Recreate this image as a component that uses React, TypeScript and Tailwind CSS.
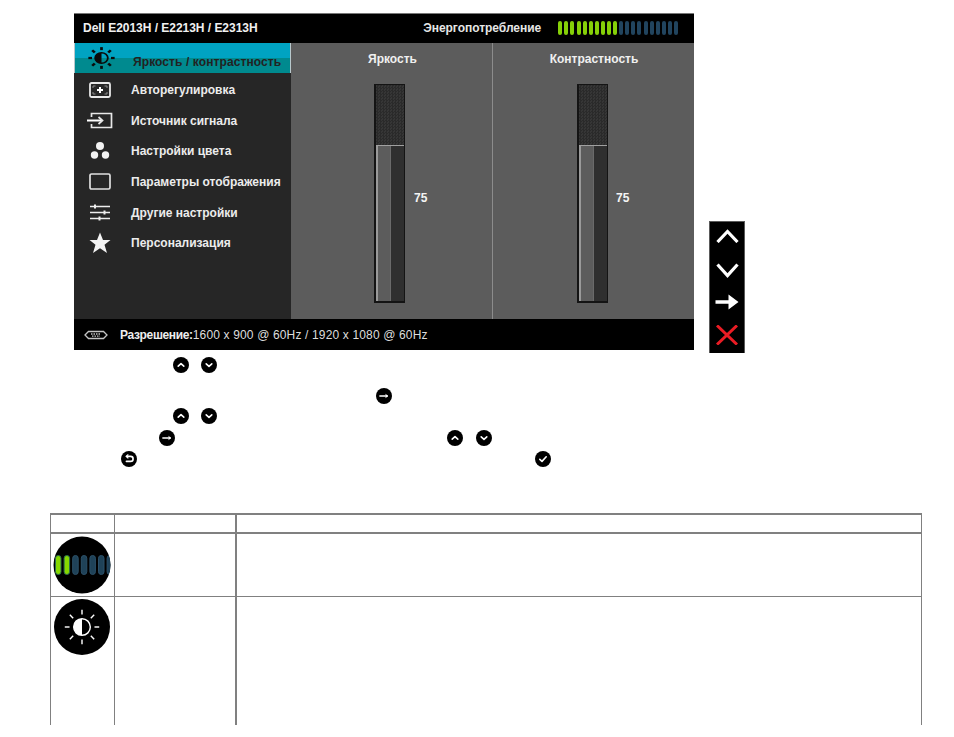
import React from "react";

const Chip = ({ children }: { children: React.ReactNode }) => (
  <span className="flex h-[16px] w-[16px] shrink-0 items-center justify-center rounded-full bg-black">
    <svg viewBox="0 0 16 16" className="h-[16px] w-[16px]" fill="none" stroke="#fff" strokeWidth="1.6" strokeLinecap="round" strokeLinejoin="round">
      {children}
    </svg>
  </span>
);
const Up = () => <Chip><path d="M5.200 9.200 8 6.600l2.800 2.600" /></Chip>;
const Down = () => <Chip><path d="M5.200 6.800 8 9.400l2.800-2.600" /></Chip>;
const Right = () => <Chip><path d="M3.800 8h7.400" strokeWidth="1.300" /><path d="M9.800 6.600 11.800 8l-2 1.400" fill="#fff" strokeWidth="0.800" /></Chip>;
const Back = () => <Chip><path d="M6 5.400H9.600a2.400 2.400 0 0 1 0 5H5.400" /><path d="M7 3.800 5 5.400 7 7" strokeWidth="1.200" /></Chip>;
const Check = () => <Chip><path d="M4.800 8.400 7 10.400l4.200-4.600" /></Chip>;

const Sun = ({ width, height, color, ray, ring }: { width: number; height: number; color: string; ray: number; ring: number }) => {
  const rays = [0, 45, 90, 135, 180, 225, 270, 315];
  return (
    <svg viewBox="0 0 32 32" width={width} height={height} fill="none" preserveAspectRatio="none">
      {rays.map((a) => (
        <line key={a} x1="16" y1="1.500" x2="16" y2="5.500" stroke={color} strokeWidth={ray} transform={`rotate(${a} 16 16)`} />
      ))}
      <circle cx="16" cy="16" r="7" stroke={color} strokeWidth={ring} />
      <path d="M16 9a7 7 0 0 0 0 14z" fill={color} />
    </svg>
  );
};

const menu: { label: string; icon: React.ReactNode }[] = [
  {
    label: "Авторегулировка",
    icon: (
      <svg width="24" height="20" viewBox="0 0 24 20" fill="none" stroke="#e8e8e8">
        <rect x="2" y="3" width="20" height="14" rx="1.500" strokeWidth="1.800" />
        <path d="M9 10h6M12 7v6" strokeWidth="2" stroke="#fff" />
        <path d="M5 8V6h2.500M16.500 6H19v2M5 12v2h2.500M16.500 14H19v-2" stroke="#8a8a8a" />
      </svg>
    ),
  },
  {
    label: "Источник сигнала",
    icon: (
      <svg width="26" height="20" viewBox="0 0 26 20" fill="none" stroke="#e8e8e8" strokeWidth="1.700">
        <path d="M4.500 6V2.500h20v14h-20V13" />
        <path d="M0 9.500h15" strokeWidth="2" stroke="#fff" />
        <path d="M11.500 6 15.500 9.500l-4 3.500" />
      </svg>
    ),
  },
  {
    label: "Настройки цвета",
    icon: (
      <svg width="24" height="20" viewBox="0 0 24 20" fill="#f2f2f2">
        <circle cx="12" cy="5" r="4" />
        <circle cx="6.500" cy="14" r="3.700" />
        <circle cx="17.500" cy="14" r="3.700" />
      </svg>
    ),
  },
  {
    label: "Параметры отображения",
    icon: (
      <svg width="24" height="20" viewBox="0 0 24 20" fill="none" stroke="#e0e0e0" strokeWidth="1.700">
        <rect x="2" y="2" width="20" height="15" rx="1.500" />
      </svg>
    ),
  },
  {
    label: "Другие настройки",
    icon: (
      <svg width="24" height="20" viewBox="0 0 24 20" fill="none" stroke="#eee" strokeWidth="1.700">
        <path d="M2 3.500h20M2 9.500h20M2 15.500h20" />
        <path d="M7 1.500v4M16.500 7.500v4M11.500 13.500v4" strokeWidth="2" />
      </svg>
    ),
  },
  {
    label: "Персонализация",
    icon: (
      <svg width="24" height="22" viewBox="0 0 24 22" fill="#f4f4f4">
        <path d="M12 0.500 15 8H22.500L16.500 12.800 19 21 12 16.200 5 21 7.500 12.800 1.500 8H9z" />
      </svg>
    ),
  },
];

const Slider = ({ title, titleClass, barClass, numClass }: { title: string; titleClass: string; barClass: string; numClass: string }) => (
  <div className="flex h-full flex-1 flex-col">
    <div className={`pt-[8px] text-center text-[12px] font-bold leading-[16px] text-[#f0f0f0] ${titleClass}`}>{title}</div>
    <div className="mt-[17px] flex items-center">
      <div className={`flex h-[219px] w-[31px] flex-col border-l-[2px] border-r border-t border-b-[2px] border-[#141414] bg-[#2f2f2f] ${barClass}`}>
        <div className="h-[60px] bg-[repeating-conic-gradient(#2a2a2a_0_25%,#363636_0_50%)] bg-[length:3px_3px]" />
        <div className="flex flex-1 border-t border-[#a0a0a0]">
          <div className="w-[15px] border-l-[2px] border-r border-l-[#9a9a9a] border-r-[#6a6a6a] bg-[#5c5c5c]" />
          <div className="flex-1 bg-[#2f2f2f]" />
        </div>
      </div>
      <div className={`pt-[8px] text-[12px] font-bold text-[#f4f4f4] ${numClass}`}>75</div>
    </div>
  </div>
);

const Row = ({ pl, mt, children }: { pl: string; mt: string; children: React.ReactNode }) => (
  <div className={`flex h-[16px] ${pl} ${mt}`}>{children}</div>
);

export default function App() {
  return (
    <div className="h-[737px] w-[954px] overflow-hidden bg-white pt-[13px] font-['Liberation_Sans',Arial,sans-serif]">
      <div className="flex h-[340px] items-end pl-[74px]">
        <div className="mb-[3px] flex h-[337px] w-[620px] flex-col">
          <div className="flex h-[30px] items-center justify-between border-t border-[#777] bg-black pb-[2px] pl-[9px] pr-[16px]">
            <span className="text-[12px] font-bold tracking-[-0.03px] text-[#f0f0f0]">Dell E2013H / E2213H / E2313H</span>
            <div className="flex items-center">
              <span className="mr-[17px] text-[12px] font-bold tracking-[-0.03px] text-[#e6e6e6]">Энергопотребление</span>
              <div className="flex gap-[2.100px]">
                {Array.from({ length: 20 }, (_, i) => (
                  <span key={i} className={i < 10 ? "h-[14px] w-[4px] rounded-[2px] bg-[#86d008]" : "h-[14px] w-[4px] rounded-[2px] bg-[#21445e]"} />
                ))}
              </div>
            </div>
          </div>
          <div className="flex flex-1">
            <div className="w-[217px] bg-[#262626]">
              <div className="mb-[1.600px] flex h-[30px] items-center border-x border-[#b8c8cc] bg-[linear-gradient(#00a3c2_0_50%,#008a8f_50%_100%)]">
                <span className="ml-[10px] flex w-[32px] justify-center"><Sun width={29} height={24} color="#0a0a0a" ray={3} ring={2} /></span>
                <span className="ml-[16px] pt-[8px] text-[12px] font-bold tracking-[0.09px] text-[#222]">Яркость / контрастность</span>
              </div>
              {menu.map((m) => (
                <div key={m.label} className="flex h-[30.670px] items-center">
                  <span className="ml-[12px] flex w-[28px] justify-center">{m.icon}</span>
                  <span className="ml-[17px] text-[12px] font-bold text-[#ececec]">{m.label}</span>
                </div>
              ))}
            </div>
            <div className="flex flex-1 bg-[#5c5c5c]">
              <Slider title="Яркость" titleClass="pl-[2px]" barClass="ml-[83px]" numClass="ml-[9px]" />
              <div className="w-px bg-[#8c8c8c]" />
              <Slider title="Контрастность" titleClass="pl-[1px]" barClass="ml-[84px]" numClass="ml-[8px]" />
            </div>
          </div>
          <div className="flex h-[31px] items-center bg-black">
            <svg width="24" height="10" viewBox="0 0 24 10" fill="none" stroke="#c4c4c4" strokeWidth="1.300" className="ml-[10px]">
              <path d="M1 5 4.500 1.500h15L23 5l-3.500 3.500h-15z" />
              <path d="M7 4h10M8 6.200h8" strokeDasharray="1.500 1" />
            </svg>
            <span className="ml-[12px] text-[12px] font-bold tracking-[-0.35px] text-[#eee]">Разрешение:</span>
            <span className="text-[12px] tracking-[0.15px] text-[#ddd]">1600 x 900 @ 60Hz / 1920 x 1080 @ 60Hz</span>
          </div>
        </div>
        <div className="ml-[15px] flex h-[132px] w-[36px] flex-col items-center border-x border-t border-[#5a5a5a] bg-black pt-[7px]">
          <svg width="23" height="14" viewBox="0 0 23 14" fill="none" stroke="#fff" strokeWidth="3.200"><path d="M1.500 13 11.500 2.500l10 10.500" /></svg>
          <svg width="23" height="15" viewBox="0 0 23 15" fill="none" stroke="#fff" strokeWidth="3.200" className="mt-[20px]"><path d="M1.500 1.500l10 11 10-11" /></svg>
          <svg width="24" height="16" viewBox="0 0 24 16" fill="#fff" className="mt-[16px]"><path d="M0.500 6.300h13V0.500L23.500 8l-10 7.500V9.700H0.500z" /></svg>
          <svg width="22" height="20" viewBox="0 0 22 20" fill="none" stroke="#ea1c24" strokeWidth="3" className="mt-[15px]"><path d="M1 0.500l20 19M21 0.500 1 19.500" /></svg>
        </div>
      </div>

      <Row pl="pl-[173px]" mt="mt-[4px]"><Up /><span className="w-[12px]" /><Down /></Row>
      <Row pl="pl-[376px]" mt="mt-[15px]"><Right /></Row>
      <Row pl="pl-[173px]" mt="mt-[4px]"><Up /><span className="w-[12px]" /><Down /></Row>
      <Row pl="pl-[159px]" mt="mt-[6px]">
        <Right />
        <span className="w-[272px]" />
        <Up />
        <span className="w-[13px]" />
        <Down />
      </Row>
      <Row pl="pl-[121px]" mt="mt-[5px]">
        <Back />
        <span className="w-[398px]" />
        <Check />
      </Row>

      <div className="ml-[50px] mt-[46px] flex h-[212px] w-[872px] flex-col border-x border-t-[2px] border-[#808080]">
        <div className="flex h-[19px] border-b-[2px] border-[#808080]">
          <div className="w-[64px] border-r border-[#808080]" />
          <div className="w-[122px] border-r-[2px] border-[#808080]" />
        </div>
        <div className="flex h-[63px] border-b border-[#808080]">
          <div className="flex w-[64px] items-center justify-center border-r border-[#808080] pr-[1px]">
            <svg width="58" height="58" viewBox="0 0 58 58">
              <defs>
                <clipPath id="meter"><circle cx="29" cy="29" r="28.500" /></clipPath>
              </defs>
              <circle cx="29" cy="29" r="28.500" fill="#000" />
              <g clipPath="url(#meter)">
                {[0, 1, 2, 3, 4, 5, 6].map((i) => (
                  <rect key={i} x={2.500 + i * 8.600} y="19.500" width="5.500" height="19" rx="2.700" fill={i < 2 ? "#86d800" : "#1f4258"} stroke={i < 2 ? "#2a6a50" : "#2c5068"} />
                ))}
              </g>
            </svg>
          </div>
          <div className="w-[122px] border-r-[2px] border-[#808080]" />
        </div>
        <div className="flex flex-1">
          <div className="flex w-[64px] items-start justify-center border-r border-[#808080] pr-[1px] pt-[2px]">
            <div className="flex h-[56px] w-[56px] items-center justify-center rounded-full bg-black">
              <Sun width={38} height={38} color="#fff" ray={1.200} ring={1.200} />
            </div>
          </div>
          <div className="w-[122px] border-r-[2px] border-[#808080]" />
        </div>
      </div>
    </div>
  );
}
